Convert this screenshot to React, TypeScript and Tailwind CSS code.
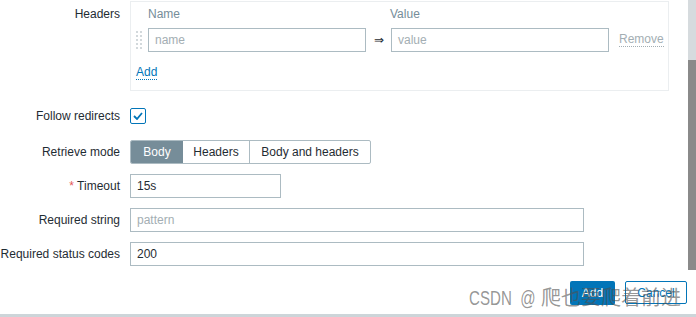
import React from "react";

function DragHandle() {
  const dots = [];
  for (let r = 0; r < 5; r++) {
    for (let c = 0; c < 2; c++) {
      dots.push(<rect key={`${r}-${c}`} x={c * 4} y={r * 4} width="2" height="2" fill="#d3d9dc" />);
    }
  }
  return (
    <svg width="6" height="18" viewBox="0 0 6 18">
      {dots}
    </svg>
  );
}

function Label({ children }: { children: React.ReactNode }) {
  return <div className="w-[120px] shrink-0 text-right leading-[14px]">{children}</div>;
}

export default function App() {
  return (
    <div className="relative w-[696px] h-[317px] overflow-hidden bg-white text-[12px] text-[#1f2c33] font-['Liberation_Sans',Arial,sans-serif]">
      <div className="flex h-[314px]">
        {/* form */}
        <div className="w-[688px] pt-[1px]">
          {/* Headers */}
          <div className="flex gap-[10px]">
            <div className="w-[120px] shrink-0 pt-[6px] text-right leading-[14px]">Headers</div>
            <div className="w-[539px] h-[90px] border border-[#ebeef0] pt-[5px]">
              <div className="flex leading-[14px] text-[#768d99]">
                <div className="w-[17px]" />
                <div className="w-[242px]">Name</div>
                <div>Value</div>
              </div>
              <div className="flex items-center mt-[7px] h-[24px]">
                <div className="w-[17px] pl-[5px] flex items-center">
                  <DragHandle />
                </div>
                <div className="w-[218px] h-[24px] border border-[#acbbc2] px-[6px] flex items-center text-[#a3aeb3]">name</div>
                <div className="w-[25px] text-center text-[#1f2c33]">⇒</div>
                <div className="w-[218px] h-[24px] border border-[#acbbc2] px-[6px] flex items-center text-[#a3aeb3]">value</div>
                <div className="ml-[10px] text-[#a3aeb3] border-b border-dotted border-[#a3aeb3] leading-[13px]">Remove</div>
              </div>
              <div className="mt-[11px] pl-[5px]">
                <span className="text-[#0275b8] border-b border-dotted border-[#0275b8] leading-[14px] inline-block">Add</span>
              </div>
            </div>
          </div>

          {/* Follow redirects */}
          <div className="flex items-center gap-[10px] mt-[17px]">
            <Label>Follow redirects</Label>
            <div className="w-[16px] h-[16px] border border-[#0275b8] rounded-[2px] flex items-center justify-center">
              <svg width="10" height="8" viewBox="0 0 10 8">
                <path d="M1 4 L4 7 L9 1" fill="none" stroke="#0275b8" strokeWidth="1.8" />
              </svg>
            </div>
          </div>

          {/* Retrieve mode */}
          <div className="flex items-center gap-[10px] mt-[16px]">
            <Label>Retrieve mode</Label>
            <div className="flex h-[24px] border border-[#acbbc2] rounded-[2px] overflow-hidden">
              <div className="w-[52px] bg-[#768d99] text-white flex items-center justify-center">Body</div>
              <div className="w-[67px] border-r border-[#acbbc2] flex items-center justify-center">Headers</div>
              <div className="w-[120px] flex items-center justify-center">Body and headers</div>
            </div>
          </div>

          {/* Timeout */}
          <div className="flex items-center gap-[10px] mt-[10px]">
            <Label>
              <span className="text-[#e45959]">*</span> Timeout
            </Label>
            <div className="w-[151px] h-[24px] border border-[#acbbc2] px-[6px] flex items-center">15s</div>
          </div>

          {/* Required string */}
          <div className="flex items-center gap-[10px] mt-[10px]">
            <Label>Required string</Label>
            <div className="w-[454px] h-[24px] border border-[#acbbc2] px-[6px] flex items-center text-[#a3aeb3]">pattern</div>
          </div>

          {/* Required status codes */}
          <div className="flex items-center gap-[10px] mt-[10px]">
            <Label>Required status codes</Label>
            <div className="w-[454px] h-[24px] border border-[#acbbc2] px-[6px] flex items-center">200</div>
          </div>

          {/* buttons */}
          <div className="flex justify-end gap-[10px] mt-[15px] pr-[1px]">
            <div className="w-[45px] h-[24px] bg-[#0275b8] rounded-[2px] text-white flex items-center justify-center">Add</div>
            <div className="w-[62px] h-[23px] border border-[#0275b8] rounded-[2px] text-[#0275b8] flex items-center justify-center">Cancel</div>
          </div>
        </div>

        {/* scrollbar */}
        <div className="w-[8px] flex flex-col">
          <div className="h-[60px] bg-[#d6dbde]" />
          <div className="h-[210px] bg-[#8a8a8a]" />
        </div>
      </div>
      <div className="h-[3px] bg-[#cdd5d9]" />

      {/* watermark */}
      <div className="absolute left-[469px] top-[285px] w-[216px] h-[26px] flex items-center whitespace-nowrap text-[rgba(80,80,80,0.6)] font-['Liberation_Sans','Noto_Sans_CJK_SC',sans-serif]">
        <div className="w-[72px] shrink-0 text-[21px] leading-[24px]">
          <div className="origin-left scale-x-[0.72]">CSDN&nbsp;&nbsp;@</div>
        </div>
        <div className="text-[20px] leading-[24px]">爬也要爬着前进</div>
      </div>
    </div>
  );
}
